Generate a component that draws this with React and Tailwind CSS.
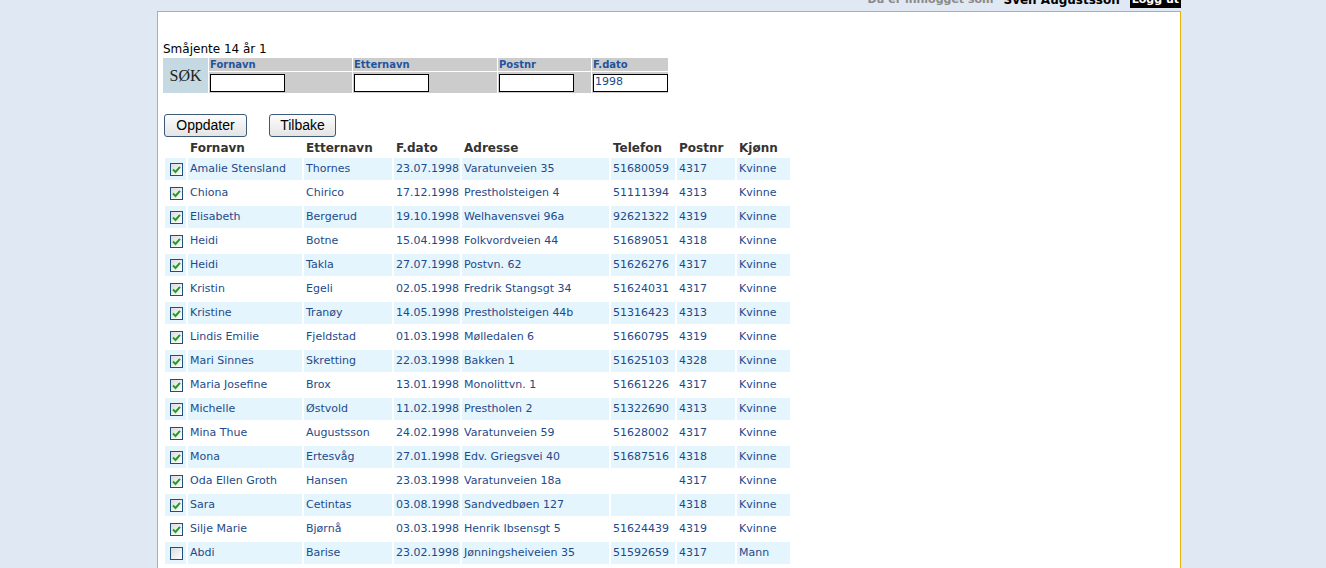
const rows = [
  ['Amalie Stensland', 'Thornes', '23.07.1998', 'Varatunveien 35', '51680059', '4317', 'Kvinne', true],
  ['Chiona', 'Chirico', '17.12.1998', 'Prestholsteigen 4', '51111394', '4313', 'Kvinne', true],
  ['Elisabeth', 'Bergerud', '19.10.1998', 'Welhavensvei 96a', '92621322', '4319', 'Kvinne', true],
  ['Heidi', 'Botne', '15.04.1998', 'Folkvordveien 44', '51689051', '4318', 'Kvinne', true],
  ['Heidi', 'Takla', '27.07.1998', 'Postvn. 62', '51626276', '4317', 'Kvinne', true],
  ['Kristin', 'Egeli', '02.05.1998', 'Fredrik Stangsgt 34', '51624031', '4317', 'Kvinne', true],
  ['Kristine', 'Tranøy', '14.05.1998', 'Prestholsteigen 44b', '51316423', '4313', 'Kvinne', true],
  ['Lindis Emilie', 'Fjeldstad', '01.03.1998', 'Mølledalen 6', '51660795', '4319', 'Kvinne', true],
  ['Mari Sinnes', 'Skretting', '22.03.1998', 'Bakken 1', '51625103', '4328', 'Kvinne', true],
  ['Maria Josefine', 'Brox', '13.01.1998', 'Monolittvn. 1', '51661226', '4317', 'Kvinne', true],
  ['Michelle', 'Østvold', '11.02.1998', 'Prestholen 2', '51322690', '4313', 'Kvinne', true],
  ['Mina Thue', 'Augustsson', '24.02.1998', 'Varatunveien 59', '51628002', '4317', 'Kvinne', true],
  ['Mona', 'Ertesvåg', '27.01.1998', 'Edv. Griegsvei 40', '51687516', '4318', 'Kvinne', true],
  ['Oda Ellen Groth', 'Hansen', '23.03.1998', 'Varatunveien 18a', '', '4317', 'Kvinne', true],
  ['Sara', 'Cetintas', '03.08.1998', 'Sandvedbøen 127', '', '4318', 'Kvinne', true],
  ['Silje Marie', 'Bjørnå', '03.03.1998', 'Henrik Ibsensgt 5', '51624439', '4319', 'Kvinne', true],
  ['Abdi', 'Barise', '23.02.1998', 'Jønningsheiveien 35', '51592659', '4317', 'Mann', false],
];

const widths = ['w-[114px]', 'w-[88px]', 'w-[66px]', 'w-[147px]', 'w-[64px]', 'w-[58px]', 'w-[53px]'];
const heads = ['Fornavn', 'Etternavn', 'F.dato', 'Adresse', 'Telefon', 'Postnr', 'Kjønn'];

const Check = ({ on }) => (
  <span className="flex h-[13px] w-[13px] items-center justify-center border border-[#1c5180] bg-gradient-to-br from-[#dcdcdc] to-white">
    {on && (
      <svg width="9" height="9" viewBox="0 0 9 9">
        <path d="M1 4.5 L3.5 7 L8 1.8" fill="none" stroke="#21a121" strokeWidth="2" />
      </svg>
    )}
  </span>
);

const App = () => {
  return (
    <div className="min-h-[568px] bg-[#dfe8f3] font-['DejaVu_Sans',Verdana,sans-serif]">
      {/* top bar, scrolled so only the lower part shows */}
      <div className="h-[11px] overflow-hidden">
        <div className="ml-[157px] flex w-[1024px] items-end justify-end mt-[-8px]">
          <span className="text-[11px] font-bold leading-[16px] text-[#8a8a8a]">Du er innlogget som</span>
          <span className="ml-[10px] text-[12px] font-bold leading-[16px] text-black">Sven Augustsson</span>
          <span className="ml-[10px] bg-black px-[2px] text-[11px] font-bold leading-[16px] text-white">Logg ut</span>
        </div>
      </div>

      <div className="ml-[157px] min-h-[560px] w-[1024px] border-x border-t border-[#e3b30a] bg-white pl-[5px] pt-[30px]">
        <div className="text-[12px] leading-[15px] text-black">Småjente 14 år 1</div>

        <table className="ml-[-1px] border-separate border-spacing-[1px]">
          <tbody>
            <tr>
              <td rowSpan={2} className="w-[45px] bg-[#c5d9e3] text-center font-['Liberation_Serif',serif] text-[16px] text-[#222]">
                SØK
              </td>
              {[['Fornavn', 'w-[143px]'], ['Etternavn', 'w-[144px]'], ['Postnr', 'w-[93px]'], ['F.dato', 'w-[76px]']].map(([l, w]) => (
                <td key={l} className={`${w} h-[13px] bg-[#cccccc] pl-[1px] text-[10px] font-bold leading-[13px] text-[#1f55a0]`}>
                  {l}
                </td>
              ))}
            </tr>
            <tr>
              {['', '', '', '1998'].map((v, i) => (
                <td key={i} className="h-[21px] bg-[#cccccc] pl-[1px] align-middle">
                  <div className="flex h-[18px] w-[75px] items-center border border-black bg-white pl-[1px] text-[11px] text-[#1e4a8a]">
                    {v}
                  </div>
                </td>
              ))}
            </tr>
          </tbody>
        </table>

        <div className="mt-[20px] ml-[1px] flex gap-[22px] font-['Liberation_Sans',Arial,sans-serif] text-[14px] text-black">
          <button className="h-[23px] w-[83px] rounded-[3px] border border-[#3c5a78] bg-gradient-to-b from-[#fdfdfd] to-[#e4e4e4]">Oppdater</button>
          <button className="h-[23px] w-[67px] rounded-[3px] border border-[#3c5a78] bg-gradient-to-b from-[#fdfdfd] to-[#e4e4e4]">Tilbake</button>
        </div>

        <table className="mt-[1px] table-fixed border-separate border-spacing-[2px] text-[11px] text-[#1e4a8a]">
          <thead>
            <tr>
              <th className="w-[21px]"></th>
              {heads.map((h, i) => (
                <th key={h} className={`${widths[i]} h-[16px] pl-[2px] text-left text-[12px] font-bold leading-[16px] text-[#333]`}>
                  {h}
                </th>
              ))}
            </tr>
          </thead>
          <tbody>
            {rows.map((r, idx) => {
              const bg = idx % 2 === 0 ? 'bg-[#e5f5fd]' : 'bg-white';
              return (
                <tr key={idx}>
                  <td className={`${bg} h-[22px] pl-[5px]`}>
                    <Check on={r[7]} />
                  </td>
                  {r.slice(0, 7).map((c, i) => (
                    <td key={i} className={`${bg} h-[22px] overflow-hidden whitespace-nowrap pl-[2px] leading-[22px]`}>
                      {c}
                    </td>
                  ))}
                </tr>
              );
            })}
          </tbody>
        </table>
      </div>
    </div>
  );
};

export default App;
